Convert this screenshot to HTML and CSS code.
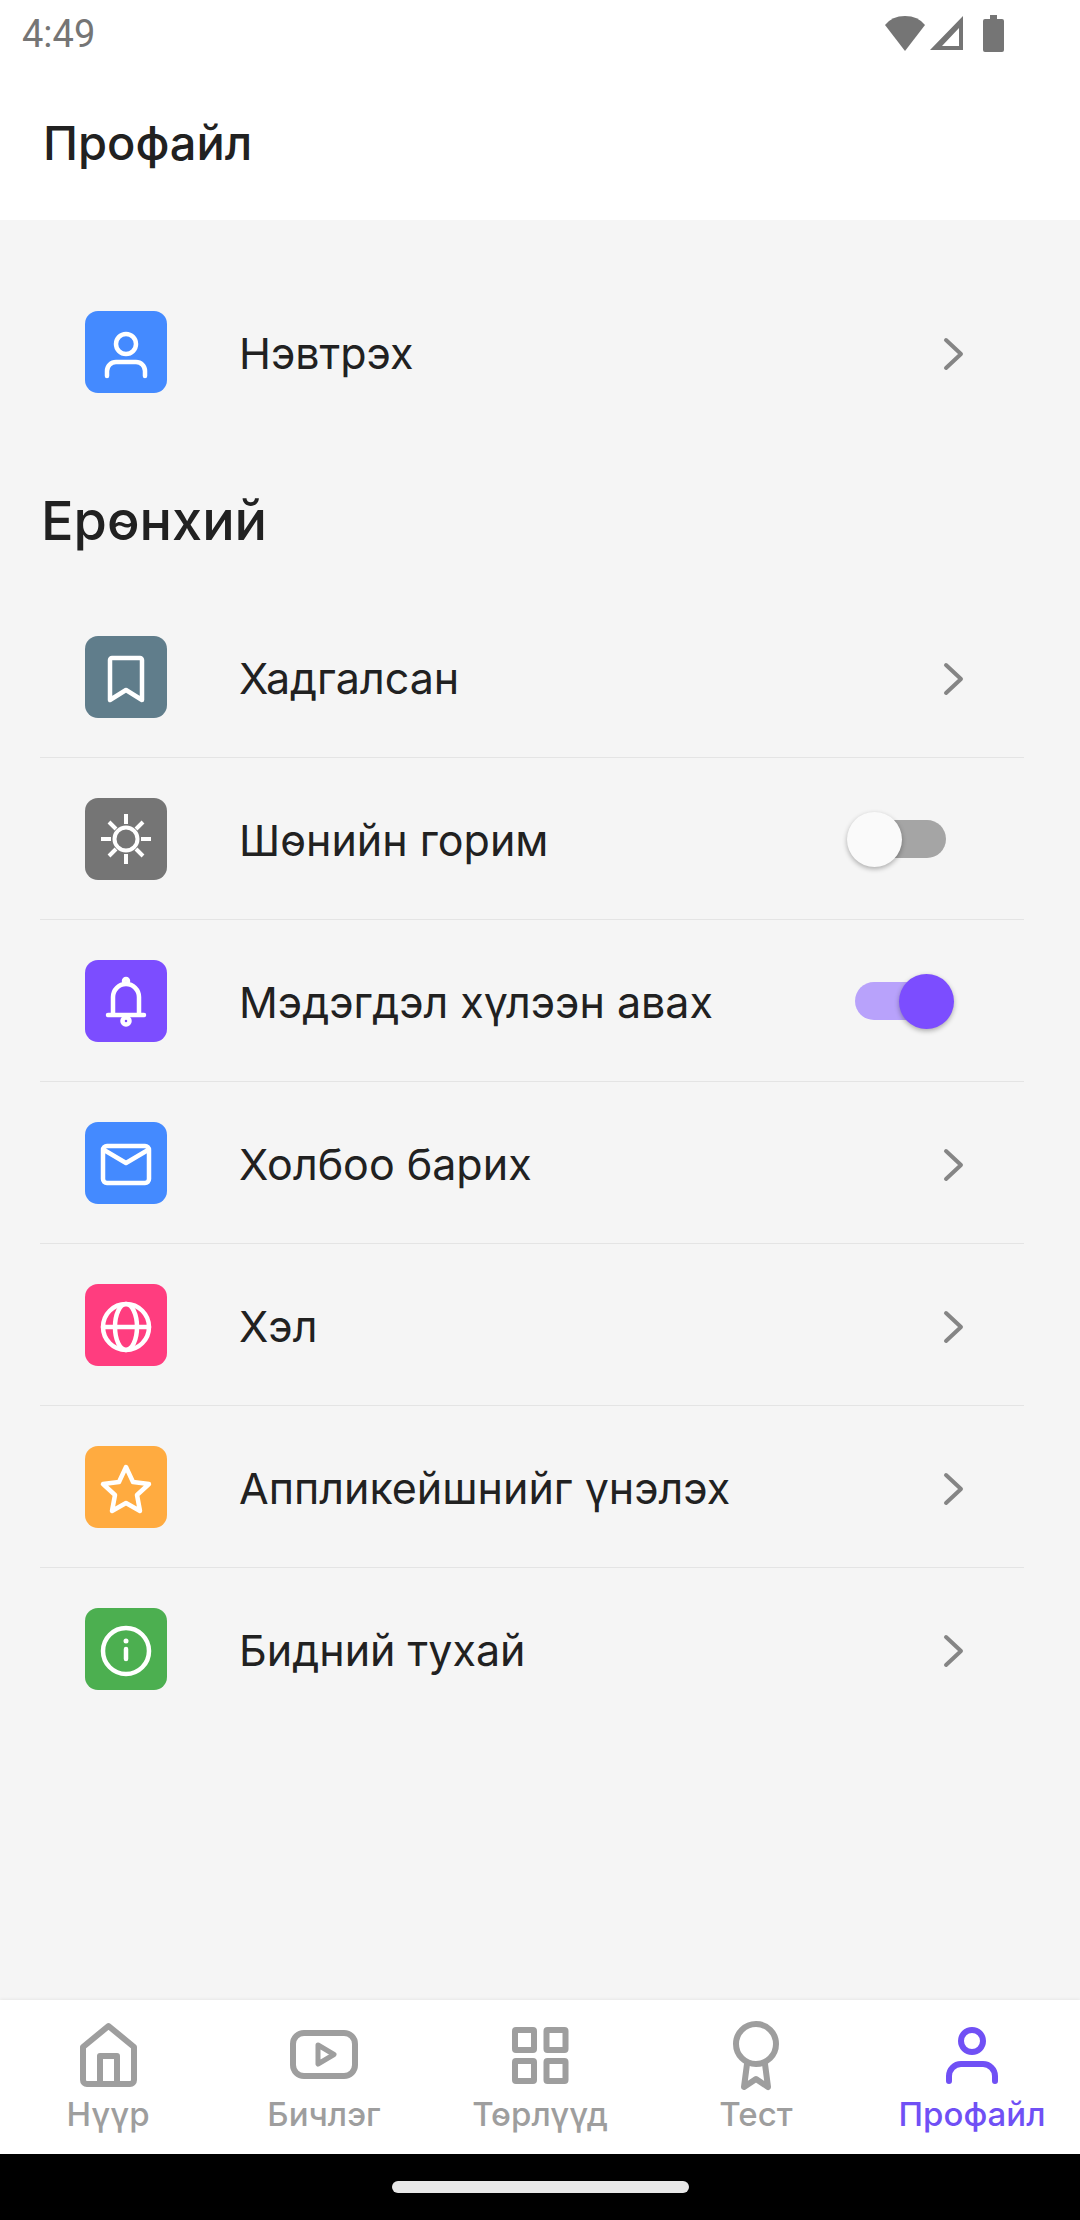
FILE: index.html
```html
<!DOCTYPE html>
<html lang="mn">
<head>
    <meta charset="UTF-8">
    <meta name="viewport" content="width=device-width, initial-scale=1.0">
    <title>Профайл</title>
    <link rel="stylesheet" href="styles.css">
</head>
<body>
    <header class="top">
        <div class="status">
            <span class="clock">4:49</span>
            <div class="status-icons">
                <svg width="42" height="36" viewBox="0 0 42 36"><path d="M21 36 L1 10 Q8 1 21 1 Q34 1 41 10 Z" fill="#757575"/></svg>
                <svg width="35" height="36" viewBox="0 0 35 36"><path d="M1 35 L34 1 V35 Z M13 31 H30 V13 Z" fill="#757575" fill-rule="evenodd"/></svg>
                <svg width="21" height="37" viewBox="0 0 21 37"><path d="M7 0 H14 V4 H19 Q21 4 21 6 V35 Q21 37 19 37 H2 Q0 37 0 35 V6 Q0 4 2 4 H7 Z" fill="#757575"/></svg>
            </div>
        </div>
        <h1 class="title">Профайл</h1>
    </header>

    <main class="content">
        <div class="row row-login">
            <span class="tile blue">
                <svg class="glyph" viewBox="0 0 82 82"><circle cx="41" cy="33" r="10"/><path d="M22 65 V60 a9 9 0 0 1 9 -9 h20 a9 9 0 0 1 9 9 v5"/></svg>
            </span>
            <span class="label">Нэвтрэх</span>
            <svg class="chevron" viewBox="0 0 22 34"><path d="M3 3 L18 17 L3 31"/></svg>
        </div>

        <h2 class="section">Ерөнхий</h2>

        <div class="row">
            <span class="tile slate">
                <svg class="glyph" viewBox="0 0 82 82"><path d="M25 64 V24 a2 2 0 0 1 2 -2 h28 a2 2 0 0 1 2 2 V64 L41 54 Z"/></svg>
            </span>
            <span class="label">Хадгалсан</span>
            <svg class="chevron" viewBox="0 0 22 34"><path d="M3 3 L18 17 L3 31"/></svg>
        </div>
        <div class="row">
            <span class="tile gray">
                <svg class="glyph thin" viewBox="0 0 82 82"><circle cx="41" cy="41" r="11.5"/><path d="M41 16 V26 M41 56 V66 M16 41 H26 M56 41 H66 M24 24 L31 31 M51 51 L58 58 M58 24 L51 31 M31 51 L24 58" stroke-linecap="butt"/></svg>
            </span>
            <span class="label">Шөнийн горим</span>
            <span class="switch"><span class="knob"></span></span>
        </div>
        <div class="row">
            <span class="tile purple">
                <svg class="glyph" viewBox="0 0 82 82"><path d="M28 54 V37 a13 13 0 0 1 26 0 V54 M23 55 H59"/><circle cx="41" cy="61" r="3.5"/><circle cx="41" cy="21" r="2"/></svg>
            </span>
            <span class="label">Мэдэгдэл хүлээн авах</span>
            <span class="switch on"><span class="knob"></span></span>
        </div>
        <div class="row">
            <span class="tile blue">
                <svg class="glyph" viewBox="0 0 82 82"><rect x="18" y="24" width="46" height="37" rx="4"/><path d="M19 28 L41 41 L63 28"/></svg>
            </span>
            <span class="label">Холбоо барих</span>
            <svg class="chevron" viewBox="0 0 22 34"><path d="M3 3 L18 17 L3 31"/></svg>
        </div>
        <div class="row">
            <span class="tile pink">
                <svg class="glyph" viewBox="0 0 82 82"><circle cx="41" cy="43" r="23"/><ellipse cx="41" cy="43" rx="11" ry="23"/><path d="M18 43 H64"/></svg>
            </span>
            <span class="label">Хэл</span>
            <svg class="chevron" viewBox="0 0 22 34"><path d="M3 3 L18 17 L3 31"/></svg>
        </div>
        <div class="row">
            <span class="tile orange">
                <svg class="glyph" viewBox="0 0 82 82"><path d="M41 21 L48 36 L64 38 L52 49 L55 65 L41 57 L27 65 L30 49 L18 38 L34 36 Z"/></svg>
            </span>
            <span class="label">Аппликейшнийг үнэлэх</span>
            <svg class="chevron" viewBox="0 0 22 34"><path d="M3 3 L18 17 L3 31"/></svg>
        </div>
        <div class="row row-last">
            <span class="tile green">
                <svg class="glyph" viewBox="0 0 82 82"><circle cx="41" cy="43" r="23"/><path d="M41 41 V51"/><circle class="dot" cx="41" cy="33" r="2.5"/></svg>
            </span>
            <span class="label">Бидний тухай</span>
            <svg class="chevron" viewBox="0 0 22 34"><path d="M3 3 L18 17 L3 31"/></svg>
        </div>
    </main>

    <nav class="tabs">
        <div class="tab">
            <svg class="tab-icon" viewBox="0 0 72 72"><path d="M11 27 L36.5 6 L62 27 V60 a4 4 0 0 1 -4 4 H15 a4 4 0 0 1 -4 -4 Z M28 64 V36 H45 V64"/></svg>
            <span>Нүүр</span>
        </div>
        <div class="tab">
            <svg class="tab-icon" viewBox="0 0 72 72"><rect x="5" y="13" width="62" height="43" rx="11"/><path d="M30 25 L46 34.5 L30 44 Z" stroke-width="5"/></svg>
            <span>Бичлэг</span>
        </div>
        <div class="tab">
            <svg class="tab-icon" viewBox="0 0 72 72"><rect x="11" y="10" width="19" height="20" rx="1"/><rect x="42.5" y="10" width="19" height="20" rx="1"/><rect x="11" y="41" width="19" height="20" rx="1"/><rect x="42.5" y="41" width="19" height="20" rx="1"/></svg>
            <span>Төрлүүд</span>
        </div>
        <div class="tab">
            <svg class="tab-icon" viewBox="0 0 72 72"><circle cx="36" cy="24" r="20"/><path d="M27 44 L24 67 L36 59 L48 67 L45 44"/></svg>
            <span>Тест</span>
        </div>
        <div class="tab active">
            <svg class="tab-icon" viewBox="0 0 72 72"><circle cx="36" cy="21" r="11"/><path d="M13 61 V56 a12 12 0 0 1 12 -12 h22 a12 12 0 0 1 12 12 v5"/></svg>
            <span>Профайл</span>
        </div>
    </nav>

    <div class="system-bar"><span class="pill"></span></div>
</body>
</html>
```

FILE: styles.css
```css
* {
    box-sizing: border-box;
}

html,
body {
    margin: 0;
    padding: 0;
}

body {
    width: 1080px;
    height: 2220px;
    display: flex;
    flex-direction: column;
    overflow: hidden;
    font-family: Inter, "Noto Sans", sans-serif;
    background-color: #f5f5f5;
    color: #212121;
}

.top {
    height: 220px;
    background-color: #fff;
}

.status {
    height: 66px;
    display: flex;
    align-items: center;
    justify-content: space-between;
    padding: 0 76px 0 22px;
}

.clock {
    padding-top: 2px;
    font-family: Roboto, sans-serif;
    font-size: 38px;
    color: #757575;
}

.status-icons {
    display: flex;
    align-items: center;
    gap: 3px;
}

.status-icons svg:last-child {
    margin-left: 16px;
}

.title {
    margin: 0;
    padding-left: 43px;
    font-size: 47px;
    line-height: 154px;
    height: 154px;
    font-weight: 500;
}

.content {
    flex: 1;
    padding: 51px 56px 0 40px;
}

.row {
    height: 162px;
    display: flex;
    align-items: center;
    padding: 0 59px 0 45px;
    border-bottom: 1px solid #e4e4e4;
}

.row-login,
.row-last {
    border-bottom: none;
}

.tile {
    width: 82px;
    height: 82px;
    flex-shrink: 0;
    border-radius: 13px;
    margin-right: 72px;
}

.blue { background-color: #448aff; }
.slate { background-color: #607d8b; }
.gray { background-color: #757575; }
.purple { background-color: #7c4dff; }
.pink { background-color: #ff3d7f; }
.orange { background-color: #ffab40; }
.green { background-color: #4caf50; }

.glyph {
    display: block;
    width: 82px;
    height: 82px;
    fill: none;
    stroke: #fff;
    stroke-width: 4.5;
    stroke-linecap: round;
    stroke-linejoin: round;
}

.glyph.thin {
    stroke-width: 4;
}

.glyph .dot {
    fill: #fff;
    stroke: none;
}

.label {
    flex: 1;
    padding-top: 2px;
    font-size: 43px;
    font-weight: 400;
}

.section {
    margin: 0;
    padding: 48px 0 35px 1px;
    font-size: 54px;
    line-height: 80px;
    font-weight: 500;
}

.chevron {
    width: 22px;
    height: 34px;
    margin-top: 4px;
    fill: none;
    stroke: #858585;
    stroke-width: 4;
    stroke-linecap: round;
    stroke-linejoin: round;
}

.switch {
    position: relative;
    width: 91px;
    height: 38px;
    margin-right: 19px;
    border-radius: 19px;
    background-color: #a5a5a5;
}

.knob {
    position: absolute;
    top: -8px;
    left: -8px;
    width: 55px;
    height: 55px;
    border-radius: 50%;
    background-color: #fafafa;
    box-shadow: 0 2px 5px rgba(0, 0, 0, 0.3);
}

.switch.on {
    background-color: #b8a2fb;
}

.switch.on .knob {
    left: 44px;
    background-color: #7c4dff;
}

.tabs {
    height: 154px;
    display: flex;
    padding-top: 20px;
    background-color: #fff;
    box-shadow: 0 -1px 3px rgba(0, 0, 0, 0.06);
}

.tab {
    width: 216px;
    display: flex;
    flex-direction: column;
    align-items: center;
    font-size: 33px;
    font-weight: 500;
    line-height: 44px;
    color: #9e9e9e;
}

.tab-icon {
    display: block;
    width: 72px;
    height: 72px;
    fill: none;
    stroke: #9e9e9e;
    stroke-width: 6;
    stroke-linecap: round;
    stroke-linejoin: round;
}

.tab.active {
    color: #7050f5;
}

.tab.active .tab-icon {
    stroke: #7050f5;
}

.system-bar {
    height: 66px;
    padding-top: 27px;
    background-color: #000;
}

.pill {
    display: block;
    width: 297px;
    height: 12px;
    margin: 0 auto;
    border-radius: 6px;
    background-color: #e8e8e8;
}
```
